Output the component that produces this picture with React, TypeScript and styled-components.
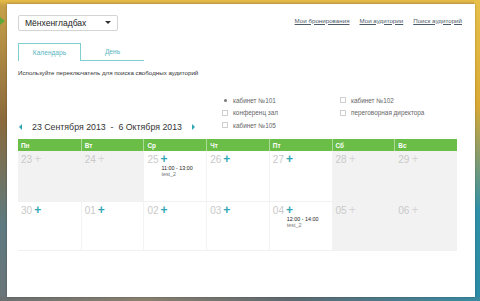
import React from "react";
import styled, { createGlobalStyle, css } from "styled-components";

const GlobalStyle = createGlobalStyle`
  html, body {
    margin: 0;
    padding: 0;
  }
  body {
    font-family: "Liberation Sans", Arial, sans-serif;
    color: #333;
  }
`;

const colors = {
  green: "#6abd47",
  teal: "#2fa6b4",
  tabTeal: "#7fcfd2",
  pastBg: "#f2f2f2",
  dayGray: "#c9c9c9",
  link: "#4d5b6b",
};

const Desktop = styled.div`
  position: relative;
  width: 480px;
  height: 301px;
  box-sizing: border-box;
  padding: 4px 5px 4px 7px;
  background:
    linear-gradient(180deg, rgba(232, 190, 70, 0.95) 0px, rgba(232, 190, 70, 0) 6px),
    linear-gradient(180deg, #caa24a 0%, #8a6a3c 40%, #5d7a80 75%, #6b7478 100%);
`;

const RightEdge = styled.div`
  position: absolute;
  top: 0;
  right: 0;
  width: 6px;
  height: 301px;
  background: linear-gradient(180deg, #e7c04a 0%, #d9a935 35%, #2f8fa8 70%, #2b8aa5 100%);
`;

const BottomEdge = styled.div`
  position: absolute;
  left: 0;
  bottom: 0;
  width: 480px;
  height: 4px;
  background: linear-gradient(90deg, #6a7070 0%, #8a8070 30%, #5f6a70 60%, #3a8aa2 100%);
`;

const WallArrow = styled.div`
  position: absolute;
  left: 0;
  top: 17px;
  width: 0;
  height: 0;
  border-top: 4px solid transparent;
  border-bottom: 4px solid transparent;
  border-left: 5px solid #5fa63a;
`;

const Window = styled.div`
  position: relative;
  width: 468px;
  height: 293px;
  background: #fff;
  box-sizing: border-box;
  padding: 10px 13px 0 11px;
  box-shadow: 0 0 2px rgba(0, 0, 0, 0.3);
`;

const TopBar = styled.div`
  display: flex;
  align-items: center;
  justify-content: space-between;
  height: 17px;
`;

const Select = styled.div`
  display: flex;
  align-items: center;
  justify-content: space-between;
  width: 100px;
  height: 16px;
  box-sizing: border-box;
  border: 1px solid #d4d4d4;
  border-radius: 2px;
  padding: 0 6px 0 6px;
  font-size: 8.5px;
  color: #222;
`;

const Caret = styled.span`
  width: 0;
  height: 0;
  border-left: 3px solid transparent;
  border-right: 3px solid transparent;
  border-top: 3px solid #333;
`;

const Links = styled.nav`
  display: flex;
  gap: 10px;
  margin-top: -5px;
`;

const Link = styled.a`
  font-size: 6.2px;
  color: ${colors.link};
  text-decoration: underline;
`;

const Tabs = styled.div`
  display: flex;
  margin-top: 12px;
`;

const Tab = styled.div<{ $active?: boolean }>`
  width: 63px;
  height: 18px;
  box-sizing: border-box;
  display: flex;
  align-items: center;
  justify-content: center;
  font-size: 6.6px;
  color: #5bb6c2;
  ${(p) =>
    p.$active
      ? css`
          border: 1px solid ${colors.tabTeal};
          border-bottom: none;
        `
      : css`
          border-bottom: 1px solid ${colors.tabTeal};
        `}
`;

const Hint = styled.p`
  margin: 8px 0 0;
  font-size: 6.2px;
  color: #333;
`;

const Controls = styled.div`
  display: flex;
  align-items: flex-end;
  margin-top: 20px;
`;

const DateNav = styled.div`
  display: flex;
  align-items: center;
  width: 204px;
  height: 12px;
  margin-bottom: -4px;
`;

const NavArrow = styled.span<{ $dir: "left" | "right" }>`
  width: 0;
  height: 0;
  border-top: 3px solid transparent;
  border-bottom: 3px solid transparent;
  ${(p) =>
    p.$dir === "left"
      ? css`
          border-right: 3px solid ${colors.teal};
          margin: 0 10px 0 1px;
        `
      : css`
          border-left: 3px solid ${colors.teal};
          margin-left: 10px;
        `}
`;

const DateText = styled.span`
  font-size: 8.8px;
  color: #333;
  white-space: pre;
`;

const Filters = styled.div`
  display: grid;
  grid-template-columns: 118px auto;
  row-gap: 4.5px;
`;

const Filter = styled.label`
  display: flex;
  align-items: center;
  gap: 5px;
  font-size: 6.4px;
  color: #666;
  height: 8px;
`;

const Check = styled.span<{ $on?: boolean }>`
  width: 4px;
  height: 4px;
  border: 1px solid #cfcfcf;
  display: flex;
  align-items: center;
  justify-content: center;
  ${(p) =>
    p.$on &&
    css`
      border-color: transparent;
      &::after {
        content: "";
        width: 3px;
        height: 3px;
        border-radius: 50%;
        background: #777;
      }
    `}
`;

const Calendar = styled.div`
  margin-top: 10px;
  width: 439px;
`;

const HeadRow = styled.div`
  display: grid;
  grid-template-columns: repeat(7, 1fr);
  background: ${colors.green};
  height: 12px;
`;

const HeadCell = styled.div`
  display: flex;
  align-items: center;
  padding-left: 3px;
  font-size: 6.4px;
  font-weight: bold;
  color: #fff;
  border-left: 1px solid rgba(255, 255, 255, 0.45);
  &:first-child {
    border-left: none;
  }
`;

const WeekRow = styled.div<{ $h: number }>`
  display: grid;
  grid-template-columns: repeat(7, 1fr);
  height: ${(p) => p.$h}px;
  border-bottom: 1px solid #f1f1f1;
`;

const DayCell = styled.div<{ $off?: boolean }>`
  box-sizing: border-box;
  padding: 2px 3px;
  background: ${(p) => (p.$off ? colors.pastBg : "#fff")};
  border-left: 1px solid ${(p) => (p.$off ? "#f2f2f2" : "#f3f3f3")};
  &:first-child {
    border-left: none;
  }
`;

const DayHead = styled.div`
  display: flex;
  align-items: center;
  gap: 2px;
  height: 12px;
`;

const DayNum = styled.span`
  font-size: 10px;
  color: ${colors.dayGray};
`;

const Plus = styled.span<{ $off?: boolean }>`
  font-size: 12px;
  line-height: 10px;
  font-weight: ${(p) => (p.$off ? "normal" : "bold")};
  color: ${(p) => (p.$off ? "#d6d6d6" : colors.teal)};
`;

const Event = styled.div`
  margin: 0 0 0 14px;
  line-height: 6px;
`;

const EventTime = styled.div`
  font-size: 5.4px;
  color: #222;
`;

const EventName = styled.div`
  font-size: 5.4px;
  color: #777;
`;

type Day = { n: string; off?: boolean; event?: [string, string] };

const weeks: { h: number; days: Day[] }[] = [
  {
    h: 50,
    days: [
      { n: "23", off: true },
      { n: "24", off: true },
      { n: "25", event: ["11:00 - 13:00", "test_2"] },
      { n: "26" },
      { n: "27" },
      { n: "28", off: true },
      { n: "29", off: true },
    ],
  },
  {
    h: 48,
    days: [
      { n: "30" },
      { n: "01" },
      { n: "02" },
      { n: "03" },
      { n: "04", event: ["12:00 - 14:00", "test_2"] },
      { n: "05", off: true },
      { n: "06", off: true },
    ],
  },
];

const dayNames = ["Пн", "Вт", "Ср", "Чт", "Пт", "Сб", "Вс"];

export default function App() {
  return (
    <>
      <GlobalStyle />
      <Desktop>
        <WallArrow />
        <RightEdge />
        <BottomEdge />
        <Window>
          <TopBar>
            <Select>
              Мёнхенгладбах
              <Caret />
            </Select>
            <Links>
              <Link>Мои бронирования</Link>
              <Link>Мои аудитории</Link>
              <Link>Поиск аудиторий</Link>
            </Links>
          </TopBar>

          <Tabs>
            <Tab $active>Календарь</Tab>
            <Tab>День</Tab>
          </Tabs>

          <Hint>Используйте переключатель для поиска свободных аудиторий</Hint>

          <Controls>
            <DateNav>
              <NavArrow $dir="left" />
              <DateText>23 Сентября 2013  -  6 Октября 2013</DateText>
              <NavArrow $dir="right" />
            </DateNav>
            <Filters>
              <Filter>
                <Check $on />
                кабинет №101
              </Filter>
              <Filter>
                <Check />
                кабинет №102
              </Filter>
              <Filter>
                <Check />
                конференц зал
              </Filter>
              <Filter>
                <Check />
                переговорная директора
              </Filter>
              <Filter>
                <Check />
                кабинет №105
              </Filter>
            </Filters>
          </Controls>

          <Calendar>
            <HeadRow>
              {dayNames.map((d) => (
                <HeadCell key={d}>{d}</HeadCell>
              ))}
            </HeadRow>
            {weeks.map((w, i) => (
              <WeekRow key={i} $h={w.h}>
                {w.days.map((d) => (
                  <DayCell key={d.n} $off={d.off}>
                    <DayHead>
                      <DayNum>{d.n}</DayNum>
                      <Plus $off={d.off}>+</Plus>
                    </DayHead>
                    {d.event && (
                      <Event>
                        <EventTime>{d.event[0]}</EventTime>
                        <EventName>{d.event[1]}</EventName>
                      </Event>
                    )}
                  </DayCell>
                ))}
              </WeekRow>
            ))}
          </Calendar>
        </Window>
      </Desktop>
    </>
  );
}
